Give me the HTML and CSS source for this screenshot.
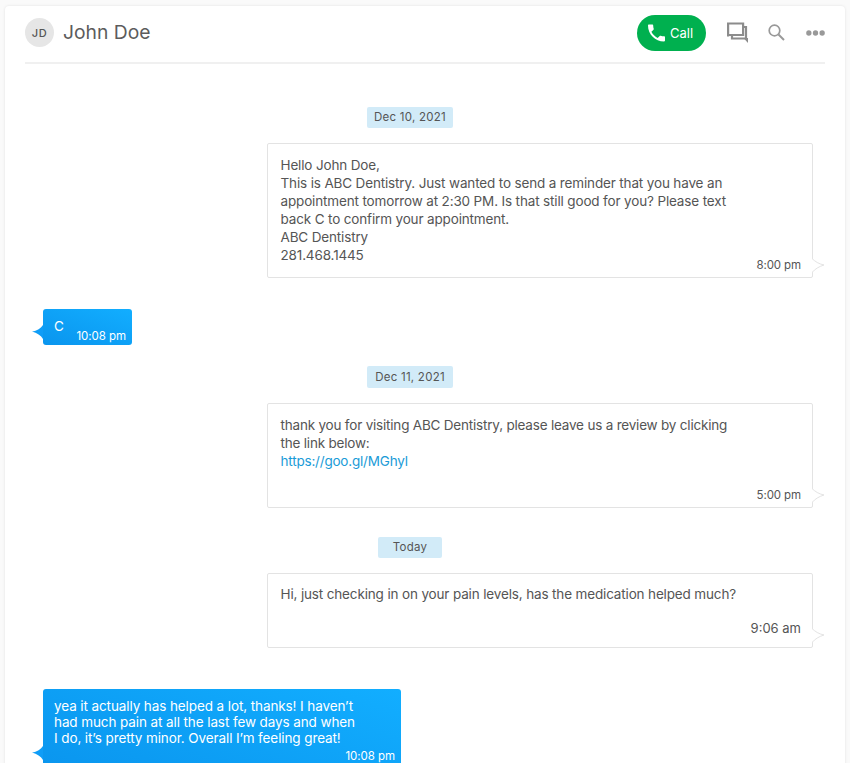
FILE: index.html
```html
<!DOCTYPE html>
<html lang="en">
<head>
<meta charset="utf-8">
<title>John Doe</title>
<link rel="stylesheet" href="styles.css">
</head>
<body>
<main class="panel">
  <header class="header">
    <div class="avatar">JD</div>
    <h1 class="name">John Doe</h1>
    <div class="actions">
      <button class="call">
        <svg class="call-icon" viewBox="3 3 18 18"><path fill="#fff" d="M6.620 10.790c1.440 2.830 3.760 5.140 6.590 6.590l2.200-2.200c.27-.27.67-.36 1.020-.24 1.120.37 2.330.57 3.570.57.55 0 1 .45 1 1V20c0 .55-.45 1-1 1-9.390 0-17-7.610-17-17 0-.55.45-1 1-1h3.500c.55 0 1 .45 1 1 0 1.250.2 2.450.57 3.570.11.35.03.74-.25 1.020l-2.200 2.200z"/></svg>
        <span>Call</span>
      </button>
      <svg class="icon-chat" viewBox="0 0 21 21"><path fill="none" stroke="#8c8c8c" stroke-width="2.200" d="M1.100 14.500V1.500h15v11.500H1.100"/><path fill="none" stroke="#8c8c8c" stroke-width="2.200" d="M5 13v3.500h14V5h-2.900"/><path fill="#8c8c8c" d="M16.500 16h4.500v5z"/></svg>
      <svg class="icon-search" viewBox="0 0 17 17"><circle cx="6.500" cy="6.500" r="5.300" fill="none" stroke="#999" stroke-width="1.700"/><path d="M10.500 10.500 16 16" stroke="#999" stroke-width="2" fill="none"/></svg>
      <svg class="icon-more" viewBox="0 0 20 6"><circle cx="3" cy="3" r="2.800" fill="#999"/><circle cx="10" cy="3" r="2.800" fill="#999"/><circle cx="17" cy="3" r="2.800" fill="#999"/></svg>
    </div>
  </header>

  <section class="thread">
    <div class="date first">Dec 10, 2021</div>
    <div class="sent">
      <p class="text">Hello John Doe,<br>This is ABC Dentistry. Just wanted to send a reminder that you have an<br>appointment tomorrow at 2:30 PM. Is that still good for you? Please text<br>back C to confirm your appointment.<br>ABC Dentistry<br>281.468.1445</p>
      <div class="time">8:00 pm</div>
      <svg class="tail-sent" viewBox="0 0 12 15"><path fill="#fff" stroke="#e3e3e3" d="M0 .5C3 3.500 7 6 12 7 7 8.500 3 11 0 14.500"/></svg>
    </div>

    <div class="received short">
      <p class="text">C</p>
      <div class="time">10:08 pm</div>
      <svg class="tail-received" viewBox="0 0 11 14"><path fill="#0f9df7" d="M11 0C9 3 5 6 0 6.500 5 8 9 10.500 11 14z"/></svg>
    </div>

    <div class="date second">Dec 11, 2021</div>
    <div class="sent link-msg">
      <p class="text">thank you for visiting ABC Dentistry, please leave us a review by clicking<br>the link below:<br><a class="link" href="#">https://goo.gl/MGhyl</a></p>
      <div class="time">5:00 pm</div>
      <svg class="tail-sent" viewBox="0 0 12 15"><path fill="#fff" stroke="#e3e3e3" d="M0 .5C3 3.500 7 6 12 7 7 8.500 3 11 0 14.500"/></svg>
    </div>

    <div class="date third">Today</div>
    <div class="sent one-line">
      <p class="text">Hi, just checking in on your pain levels, has the medication helped much?</p>
      <div class="time big">9:06 am</div>
      <svg class="tail-sent" viewBox="0 0 12 15"><path fill="#fff" stroke="#e3e3e3" d="M0 .5C3 3.500 7 6 12 7 7 8.500 3 11 0 14.500"/></svg>
    </div>

    <div class="received long">
      <p class="text">yea it actually has helped a lot, thanks! I haven’t<br>had much pain at all the last few days and when<br>I do, it’s pretty minor. Overall I’m feeling great!</p>
      <div class="time">10:08 pm</div>
      <svg class="tail-received" viewBox="0 0 11 14"><path fill="#0f9df7" d="M11 0C9 3 5 6 0 6.500 5 8 9 10.500 11 14z"/></svg>
    </div>
  </section>
</main>
</body>
</html>
```
FILE: styles.css
```css
* { box-sizing: border-box; }
html, body { margin: 0; height: 763px; overflow: hidden; background: #fafafa; }
body { font-family: Inter, "Liberation Sans", sans-serif; color: #555; }
.panel {
  width: 840px;
  height: 763px;
  margin: 6px 0 0 5px;
  padding: 0 20px;
  background: #fff;
  border-radius: 4px 4px 0 0;
  box-shadow: 0 0 3px rgba(0,0,0,.1);
}
.header {
  display: flex;
  align-items: center;
  height: 58px;
  border-bottom: 2px solid #f0f0f0;
  padding-bottom: 3px;
}
.avatar {
  width: 29px;
  height: 29px;
  border-radius: 50%;
  background: #e6e6e6;
  color: #555;
  font-size: 11px;
  font-weight: 500;
  letter-spacing: .5px;
  display: flex;
  align-items: center;
  justify-content: center;
}
.name { margin: 0 0 2px 9px; font-size: 19.300px; font-weight: 400; color: #5c5c5c; }
.actions { margin-left: auto; display: flex; align-items: center; }
.call {
  width: 69px;
  height: 36px;
  margin-right: 21px;
  border: 0;
  border-radius: 18px;
  background: #00b04f;
  color: #fff;
  font: 400 13px Inter, sans-serif;
  display: flex;
  align-items: center;
  padding: 0 0 0 11px;
}
.call-icon { width: 17px; height: 18px; margin-right: 5px; }
.icon-chat { width: 21px; height: 21px; margin-right: 20px; }
.icon-search { width: 17px; height: 17px; margin-right: 21px; }
.icon-more { width: 19px; height: 6px; }

.thread { display: flex; flex-direction: column; }
.date {
  align-self: center;
  margin-right: 30px;
  height: 21px;
  padding: 0 4px;
  background: #d2ebf8;
  border-radius: 2px;
  font-size: 11.500px;
  letter-spacing: .25px;
  line-height: 21px;
  color: #555;
  text-align: center;
}
.date.first { width: 86px; margin-top: 43px; }
.date.second { width: 86px; margin-top: 21px; height: 22px; line-height: 22px; }
.date.third { width: 64px; margin-top: 29px; }
.text { margin: 0; font-size: 13.500px; line-height: 18px; letter-spacing: -.15px; }
.sent {
  position: relative;
  align-self: flex-end;
  width: 546px;
  margin: 15px 12px 0 0;
  padding: 12px 12px 0 12.500px;
  background: #fff;
  border: 1px solid #e3e3e3;
  border-radius: 2px;
  height: 135px;
}
.sent .time { position: absolute; right: 11px; bottom: 5px; font-size: 11.500px; line-height: 14px; color: #555; letter-spacing: -.1px; }
.sent .time.big { font-size: 13px; bottom: 12px; letter-spacing: 0; }
.link-msg { height: 105px; }
.link-msg .text { letter-spacing: -.2px; }
.one-line { height: 75px; padding-top: 11px; }
.link { color: #1a9bd7; text-decoration: none; }
.tail-sent { position: absolute; right: -12px; bottom: 4px; width: 12px; height: 15px; }
.received {
  position: relative;
  align-self: flex-start;
  margin-left: 18px;
  color: #fff;
  background: linear-gradient(20deg, #0a95ee, #12aeff);
  border-radius: 3px;
  padding: 9px 6px 0 11px;
}
.received .text { color: #fff; line-height: 16px; letter-spacing: -.1px; }
.received .time { text-align: right; font-size: 11.500px; line-height: 14px; letter-spacing: -.05px; }
.received.short { width: 89px; height: 36px; margin-top: 31px; }
.received.short .time { margin-top: -5px; }
.received.long { width: 358px; height: 84px; margin-top: 41px; }
.received.long .time { margin-top: 3px; }
.tail-received { position: absolute; left: -11px; bottom: 6px; width: 11px; height: 14px; }
.received.long .tail-received { bottom: 13px; }
```
